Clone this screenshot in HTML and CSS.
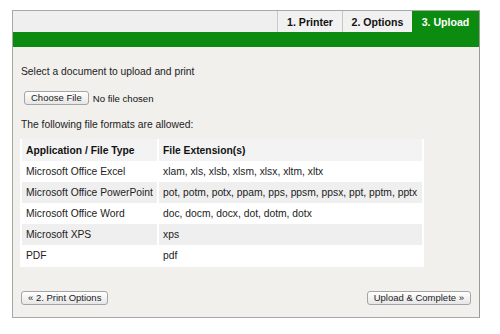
FILE: index.html
```html
<!DOCTYPE html>
<html lang="en">
<head>
    <meta charset="UTF-8">
    <title>Upload</title>
    <link rel="stylesheet" href="styles.css">
</head>
<body>
    <div class="panel">
        <div class="tabs">
            <div class="tab">1. Printer</div>
            <div class="tab">2. Options</div>
            <div class="tab active">3. Upload</div>
        </div>
        <div class="band"></div>

        <div class="content">
            <p class="intro">Select a document to upload and print</p>
            <div class="file-row">
                <button type="button" class="btn">Choose File</button>
                <span class="file-name">No file chosen</span>
            </div>
            <p class="allowed">The following file formats are allowed:</p>

            <table class="formats">
                <tr>
                    <th>Application / File Type</th>
                    <th>File Extension(s)</th>
                </tr>
                <tr>
                    <td>Microsoft Office Excel</td>
                    <td>xlam, xls, xlsb, xlsm, xlsx, xltm, xltx</td>
                </tr>
                <tr>
                    <td>Microsoft Office PowerPoint</td>
                    <td>pot, potm, potx, ppam, pps, ppsm, ppsx, ppt, pptm, pptx</td>
                </tr>
                <tr>
                    <td>Microsoft Office Word</td>
                    <td>doc, docm, docx, dot, dotm, dotx</td>
                </tr>
                <tr>
                    <td>Microsoft XPS</td>
                    <td>xps</td>
                </tr>
                <tr>
                    <td>PDF</td>
                    <td>pdf</td>
                </tr>
            </table>

            <div class="actions">
                <button type="button" class="btn">&laquo; 2. Print Options</button>
                <button type="button" class="btn">Upload &amp; Complete &raquo;</button>
            </div>
        </div>
    </div>
</body>
</html>
```

FILE: styles.css
```css
body {
    margin: 0;
    padding: 10px 20px 0 12px;
    background: #fff;
    font-family: "Liberation Sans", Arial, sans-serif;
    font-size: 10.3px;
    color: #222;
}
.panel {
    width: 466px;
    height: 306px;
    border: 1px solid #a8a8a8;
    border-right-color: #999;
    background: #f1f0ec;
    display: flex;
    flex-direction: column;
}
.tabs {
    display: flex;
    justify-content: flex-end;
    height: 21px;
    background: #efefef;
}
.tab {
    display: flex;
    align-items: center;
    justify-content: center;
    border-left: 1px solid #c8c8c8;
    background: #f1f1f1;
    font-size: 10.6px;
    font-weight: bold;
    color: #111;
}
.tab:nth-child(1) {
    width: 64px;
}
.tab:nth-child(2) {
    width: 69px;
}
.tab.active {
    width: 67px;
    border-left: none;
    background: #0b8c10;
    color: #fff;
}
.band {
    height: 15px;
    background: #0b8c10;
}
.content {
    flex: 1;
    padding: 18px 8px 0 8px;
    display: flex;
    flex-direction: column;
}
p {
    margin: 0;
    line-height: 14px;
}
.file-row {
    display: flex;
    align-items: center;
    gap: 4px;
    margin: 12px 0 0 3px;
}
.btn {
    font-family: "Liberation Sans", Arial, sans-serif;
    font-size: 9.5px;
    height: 14px;
    padding: 0 6px;
    line-height: 12px;
    color: #222;
    background: linear-gradient(#ffffff, #e6e6e6);
    border: 1px solid #a5a5a5;
    border-radius: 3px;
}
.file-name {
    font-size: 9.6px;
    color: #111;
}
.allowed {
    margin-top: 13px;
}
.formats {
    margin: 7px 0 0 -1px;
    width: 404px;
    background: #fff;
    border-spacing: 2px 0;
    padding: 0 0 1px 0;
    border-collapse: separate;
}
.formats th, .formats td {
    text-align: left;
    padding: 0 4px;
    height: 21px;
    white-space: nowrap;
}
.formats th {
    height: 22px;
    font-weight: bold;
    color: #111;
    background: #f3f3f3;
}
.formats th:first-child, .formats td:first-child {
    width: 127px;
}
.formats tr:nth-child(odd) td {
    background: #efefef;
}
.actions {
    display: flex;
    justify-content: space-between;
    margin: 24px 0 0 0;
}
```
